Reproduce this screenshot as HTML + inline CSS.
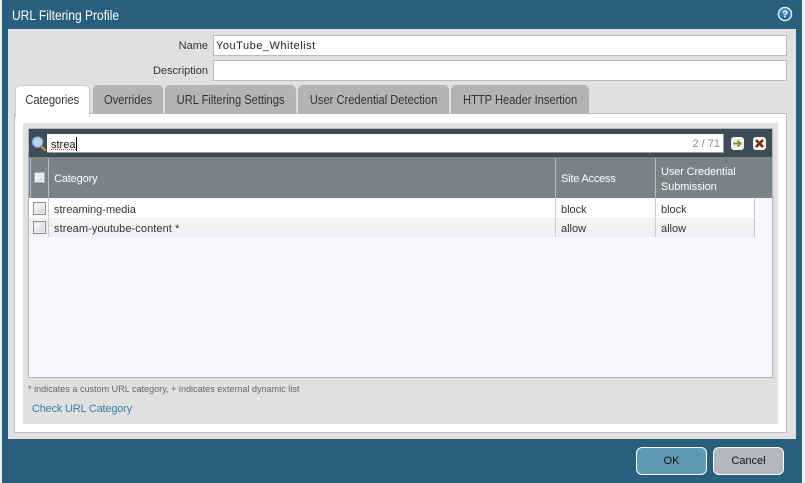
<!DOCTYPE html>
<html><head><meta charset="utf-8"><style>
html,body{margin:0;padding:0;width:805px;height:483px;overflow:hidden;background:#f0f0f0}
body{position:relative;font-family:"Liberation Sans",sans-serif;color:#333}
div{position:absolute;box-sizing:border-box}
.t{white-space:nowrap;font-size:11px;line-height:14px}
.tab{top:85px;height:29px;background:#b3b3b3;border-radius:5px 5px 0 0;text-align:center;font-size:12.5px;line-height:30px;color:#333;white-space:nowrap}
.tab span{display:inline-block;transform:scaleX(.89);transform-origin:center}
.cb{width:13px;height:13px;border:1px solid #8a8f92;background:linear-gradient(135deg,#fff,#cfd1d3);box-shadow:inset 0 0 0 1px #eee}
.btn{top:447px;width:71px;height:28px;border:1.5px solid #fff;border-radius:6px;text-align:center;font-size:11px;line-height:26px;color:#111}
</style></head><body>
<div style="left:2px;top:0;width:800px;height:483px;background:#285f7d"></div>
<div class="t" style="left:12px;top:8px;font-size:13.5px;line-height:16px;color:#fff;transform:scaleX(.89);transform-origin:left center">URL Filtering Profile</div>
<svg style="position:absolute;left:777px;top:6px" width="16" height="16" viewBox="0 0 16 16"><defs><radialGradient id="g" cx=".5" cy=".35" r=".7"><stop offset="0" stop-color="#5ba3d0"/><stop offset="1" stop-color="#0d4a80"/></radialGradient></defs><circle cx="8" cy="8" r="6.5" fill="url(#g)" stroke="#dfeaf2" stroke-width="1.6"/><text x="8" y="11.5" font-family="Liberation Sans" font-size="10" font-weight="bold" fill="#fff" text-anchor="middle">?</text></svg>

<div style="left:8px;top:29px;width:788px;height:410px;background:#e0e0e0"></div>
<div class="t" style="right:597px;top:39px;color:#333">Name</div>
<div style="left:213px;top:35px;width:574px;height:21px;background:#fff;border:1px solid #bcbcbc"></div>
<div class="t" style="left:216px;top:39px;color:#222;letter-spacing:.52px">YouTube_Whitelist</div>
<div class="t" style="right:597px;top:64px;color:#333">Description</div>
<div style="left:213px;top:60px;width:574px;height:21px;background:#fff;border:1px solid #bcbcbc"></div>

<div style="left:14px;top:113px;width:773px;height:320px;background:#fff;border:1px solid #bcbcbc"></div>
<div class="tab" style="left:15px;width:75px;background:#fff;height:32px;border:1px solid #ccc;border-bottom:0;line-height:29px"><span>Categories</span></div>
<div class="tab" style="left:93px;width:70px"><span>Overrides</span></div>
<div class="tab" style="left:165px;width:131px"><span>URL Filtering Settings</span></div>
<div class="tab" style="left:298px;width:151px"><span>User Credential Detection</span></div>
<div class="tab" style="left:451px;width:138px"><span>HTTP Header Insertion</span></div>

<div style="left:23px;top:123px;width:755px;height:301px;background:#e0e0e0"></div>

<div style="left:28px;top:128px;width:745px;height:250px;background:#f8f9fc;border:1px solid #b0b5ba"></div>
<div style="left:29px;top:129px;width:743px;height:28px;background:#3d4d57"></div>
<svg style="position:absolute;left:31px;top:135px" width="16" height="17" viewBox="0 0 17 18"><line x1="10" y1="11" x2="15" y2="16" stroke="#c08a50" stroke-width="2.4" stroke-linecap="round"/><circle cx="7" cy="7.5" r="5.5" fill="#b5d5ee" stroke="#7ea9cf" stroke-width="1.2"/></svg>
<div style="left:47px;top:134px;width:677px;height:19px;background:#fff;border-bottom:1px solid #999;border-right:1px solid #999"></div>
<div class="t" style="left:51px;top:138px;color:#111">strea</div>
<div style="left:51px;top:149px;width:25px;height:0;border-top:1px dotted #d33"></div>
<div style="left:76px;top:137px;width:1px;height:14px;background:#000"></div>
<div class="t" style="right:85px;top:137px;color:#888">2 / 71</div>
<div style="left:731px;top:137px;width:13px;height:13px;background:#f4f4ee;border-radius:3px"></div>
<svg style="position:absolute;left:731px;top:137px" width="13" height="13" viewBox="0 0 13 13"><path d="M2 6.5H9M6.5 3.5L9.5 6.5L6.5 9.5" fill="none" stroke="#7d9a2a" stroke-width="2"/></svg>
<div style="left:753px;top:137px;width:13px;height:13px;background:#f4f4ee;border-radius:3px"></div>
<svg style="position:absolute;left:753px;top:137px" width="13" height="13" viewBox="0 0 13 13"><path d="M3 3L10 10M10 3L3 10" fill="none" stroke="#7a2a1c" stroke-width="2.6"/></svg>

<div style="left:29px;top:157px;width:743px;height:41px;background:#7a8488"></div>
<div style="left:30px;top:158px;width:1px;height:40px;background:#b5bcc0"></div>
<div style="left:48px;top:158px;width:1px;height:40px;background:#b5bcc0"></div>
<div style="left:555px;top:158px;width:1px;height:40px;background:#b5bcc0"></div>
<div style="left:655px;top:158px;width:1px;height:40px;background:#b5bcc0"></div>
<div class="cb" style="left:34px;top:172px;width:11px;height:11px;border-color:#aab0b3"></div>
<div class="t" style="left:54px;top:172px;color:#fff;letter-spacing:-.15px">Category</div>
<div class="t" style="left:561px;top:172px;color:#fff;letter-spacing:-.2px">Site Access</div>
<div class="t" style="left:661px;top:165px;color:#fff;line-height:15px;letter-spacing:-.12px">User Credential<br>Submission</div>

<div style="left:29px;top:198px;width:726px;height:20px;background:#fff"></div>
<div style="left:29px;top:218px;width:726px;height:19px;background:#f0f1f3"></div>
<div style="left:48px;top:198px;width:1px;height:39px;background:#c5cccf"></div>
<div style="left:555px;top:198px;width:1px;height:39px;background:#c5cccf"></div>
<div style="left:655px;top:198px;width:1px;height:39px;background:#c5cccf"></div>
<div style="left:754px;top:198px;width:1px;height:39px;background:#c5cccf"></div>
<div class="cb" style="left:33px;top:202px"></div>
<div class="cb" style="left:33px;top:221px"></div>
<div class="t" style="left:54px;top:203px">streaming-media</div>
<div class="t" style="left:54px;top:222px;letter-spacing:.08px">stream-youtube-content *</div>
<div class="t" style="left:561px;top:203px">block</div>
<div class="t" style="left:561px;top:222px">allow</div>
<div class="t" style="left:661px;top:203px">block</div>
<div class="t" style="left:661px;top:222px">allow</div>

<div class="t" style="left:28px;top:382px;font-size:9px;color:#666;letter-spacing:.03px">* indicates a custom URL category, + indicates external dynamic list</div>
<div class="t" style="left:32px;top:402px;color:#2f86ad;letter-spacing:-.2px">Check URL Category</div>

<div class="btn" style="left:636px;background:#5f9ab5">OK</div>
<div class="btn" style="left:713px;background:#b4b8be">Cancel</div>
</body></html>
